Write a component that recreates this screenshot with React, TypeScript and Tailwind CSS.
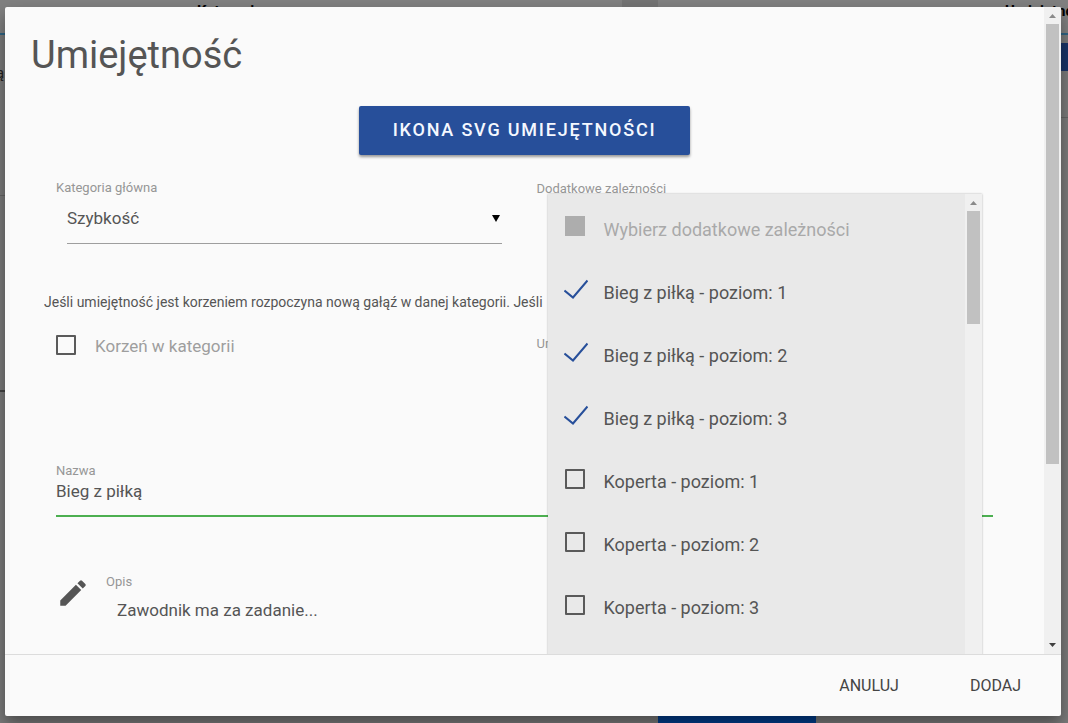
import { useState } from "react";

const dependencies = [
  "Bieg z piłką - poziom: 1",
  "Bieg z piłką - poziom: 2",
  "Bieg z piłką - poziom: 3",
  "Koperta - poziom: 1",
  "Koperta - poziom: 2",
  "Koperta - poziom: 3",
];

function Arrow({ down = false, className }: { down?: boolean; className: string }) {
  return (
    <svg viewBox="0 0 8 4" preserveAspectRatio="none" className={className} fill="currentColor" aria-hidden="true">
      <path d={down ? "M0 0h8L4 4z" : "M0 4h8L4 0z"} />
    </svg>
  );
}

function Backdrop() {
  return (
    <div className="flex h-screen flex-col bg-[#7b7b7b]" aria-hidden="true">
      <div className="flex h-[35px] border-b-2 border-[#2f6484] bg-[#808080] text-[15px] leading-[22px] font-bold text-black">
        <div className="w-[622px] shrink-0 pl-[197px]">Kategoria</div>
        <div className="w-9 shrink-0 bg-[#747474]" />
        <div className="min-w-0 flex-1 pl-[347px] whitespace-nowrap">Umiejętność</div>
      </div>
      <div className="flex flex-1 items-start justify-between">
        <div className="w-5">
          <div className="-ml-1 h-[161px] border-b border-[#666666] pt-[27px] text-[15px] text-[#222222]">ą</div>
          <div className="h-[196px] border-b-2 border-[#444444]" />
        </div>
        <div className="w-5">
          <div className="mt-2 h-7 bg-[#1a3468]" />
          <div className="h-[47px] border-b border-[#666666]" />
        </div>
      </div>
      <div className="ml-[658px] h-5 w-[158px] bg-[#003d8c]" />
    </div>
  );
}

export default function App() {
  const [checked, setChecked] = useState([true, true, true, false, false, false]);

  return (
    <div className="relative h-screen overflow-hidden font-['Roboto',sans-serif] text-[#555555]">
      <Backdrop />
      <div className="absolute inset-0 flex pt-[7px] pr-[7px] pb-[7px] pl-[5px]">
        <div
          role="dialog"
          aria-labelledby="dialog-title"
          className="flex min-h-0 flex-1 flex-col overflow-hidden rounded-[2px] bg-[#fafafa] shadow-[0_8px_16px_rgba(0,0,0,0.4)]"
        >
          <div className="flex min-h-0 flex-1">
            <div className="min-w-0 flex-1 overflow-hidden">
              <h1 id="dialog-title" className="px-[26px] pt-[23px] text-[38px] leading-[50px]">
                Umiejętność
              </h1>
              <div className="mt-[26px] flex justify-center">
                <button className="h-[49px] rounded-[2px] bg-[#274f9a] px-[34px] pb-0.5 text-[18px] font-medium tracking-widest text-[#f4f8ff] shadow-[0_2px_3px_rgba(0,0,0,0.4)]">
                  IKONA SVG UMIEJĘTNOŚCI
                </button>
              </div>

              <div className="px-[39px]">
                <div className="mt-[23px] grid h-[114px] grid-cols-2">
                  <div className="px-3">
                    <label htmlFor="category" className="block text-[13px] leading-5 text-[#969696]">
                      Kategoria główna
                    </label>
                    <div className="relative mx-[11px]">
                      <select
                        id="category"
                        className="block h-[46px] w-full appearance-none border-b border-[#9e9e9e] bg-transparent pb-1 text-[17px]"
                      >
                        <option>Szybkość</option>
                      </select>
                      <Arrow down className="pointer-events-none absolute top-[17px] right-0.5 h-[7px] w-2 text-black" />
                    </div>
                  </div>
                  <div className="px-3">
                    <div className="relative">
                      <span id="deps-label" className="block text-[13px] leading-[22px] text-[#969696]">
                        Dodatkowe zależności
                      </span>
                      <div className="absolute inset-x-[11px] top-4 z-10 flex h-[520px] bg-[#e9e9e9] shadow-[0_0_2px_rgba(0,0,0,0.3)]">
                        <ul aria-labelledby="deps-label" className="flex-1 pt-[3px] text-[18px]">
                          <li className="flex h-16 items-center pl-[17px] text-[#a9a9a9]">
                            <span className="mb-1.5 size-5 bg-[#adadad]" />
                            <span className="ml-[19px]">Wybierz dodatkowe zależności</span>
                          </li>
                          {dependencies.map((name, i) => (
                            <li key={name}>
                              <label className="flex h-[63px] items-center pl-[17px]">
                                <span className="relative mb-1.5 size-5">
                                  <input
                                    type="checkbox"
                                    checked={checked[i]}
                                    onChange={() => setChecked(checked.map((c, j) => (j === i ? !c : c)))}
                                    className="peer block size-5 appearance-none rounded-[1px] border-2 border-[#5a5a5a] checked:border-transparent"
                                  />
                                  <svg
                                    viewBox="0 0 24 20"
                                    fill="none"
                                    stroke="#274f9a"
                                    strokeWidth="2"
                                    className="pointer-events-none absolute -top-px -left-px hidden h-5 w-6 peer-checked:block"
                                  >
                                    <path d="M0.5 11.5l8.5 7L23.5 1.5" />
                                  </svg>
                                </span>
                                <span className="ml-[19px]">{name}</span>
                              </label>
                            </li>
                          ))}
                        </ul>
                        <div className="flex w-[17px] flex-col items-center bg-[#f0f0f0]">
                          <Arrow className="my-[7px] h-1 w-[7px] shrink-0 text-[#8a8a8a]" />
                          <div className="-mt-px h-[113px] w-[13px] bg-[#c1c1c1]" />
                        </div>
                      </div>
                    </div>
                  </div>
                </div>

                <p className="overflow-hidden text-[14px] leading-5 whitespace-nowrap">
                  Jeśli umiejętność jest korzeniem rozpoczyna nową gałąź w danej kategorii. Jeśli
                </p>

                <div className="mt-[22px] grid h-[127px] grid-cols-2">
                  <div className="px-3">
                    <label className="flex items-start text-[17px] leading-6 text-[#9e9e9e]">
                      <input
                        type="checkbox"
                        className="mt-px size-5 appearance-none rounded-[1px] border-2 border-[#5a5a5a] checked:bg-[#5a5a5a]"
                      />
                      <span className="ml-[19px]">Korzeń w kategorii</span>
                    </label>
                  </div>
                  <div className="px-3 text-[13px] leading-5 text-[#969696]">Umiejętność</div>
                </div>

                <div className="px-3">
                  <label htmlFor="name" className="block text-[13px] leading-5 text-[#969696]">
                    Nazwa
                  </label>
                  <input
                    id="name"
                    defaultValue="Bieg z piłką"
                    className="block h-9 w-full border-b-2 border-[#4caf50] bg-transparent pb-3.5 text-[17px] outline-none"
                  />
                </div>

                <div className="mt-[55px] flex px-3">
                  <svg viewBox="0 0 24 24" fill="currentColor" className="mt-1 size-[34px]" aria-hidden="true">
                    <path d="M3 17.25V21h3.75L17.81 9.94l-3.75-3.75L3 17.25zM20.71 7.04a1 1 0 0 0 0-1.41l-2.34-2.34a1 1 0 0 0-1.41 0l-1.83 1.83 3.75 3.75 1.83-1.83z" />
                  </svg>
                  <div className="ml-4 flex-1">
                    <label htmlFor="description" className="block text-[13px] leading-5 text-[#969696]">
                      Opis
                    </label>
                    <input
                      id="description"
                      defaultValue="Zawodnik ma za zadanie..."
                      className="mt-[7px] block h-6 w-full bg-transparent px-[11px] text-[17px] outline-none"
                    />
                  </div>
                </div>
              </div>
            </div>

            <div className="flex w-[17px] flex-col items-center bg-[#f0f0f0]">
              <Arrow className="mt-[7px] h-1 w-[7px] shrink-0 text-[#8a8a8a]" />
              <div className="mt-1.5 h-[440px] w-[13px] bg-[#c1c1c1]" />
              <Arrow down className="mt-auto mb-[7px] h-1 w-[7px] shrink-0 text-[#404040]" />
            </div>
          </div>

          <div className="flex h-[62px] shrink-0 items-center justify-end gap-[71px] border-t border-[#dcdcdc] pr-10 text-[16px] text-[#444444]">
            <button>ANULUJ</button>
            <button>DODAJ</button>
          </div>
        </div>
      </div>
    </div>
  );
}
